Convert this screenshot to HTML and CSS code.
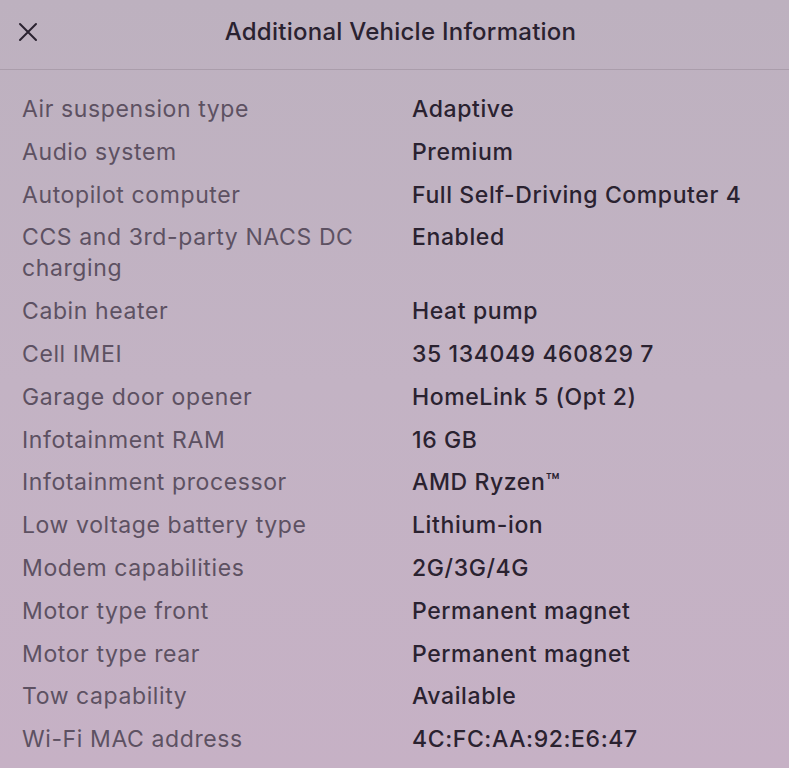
FILE: index.html
```html
<!DOCTYPE html>
<html lang="en">
<head>
<meta charset="utf-8">
<title>Additional Vehicle Information</title>
<link rel="stylesheet" href="styles.css">
</head>
<body>
<div class="screen">
  <header class="topbar">
    <button class="close" aria-label="Close">
      <svg width="20" height="20" viewBox="0 0 20 20"><path d="M2 2 L18 18 M18 2 L2 18" stroke="currentColor" stroke-width="2" stroke-linecap="round"/></svg>
    </button>
    <h1 class="title">Additional Vehicle Information</h1>
  </header>
  <dl class="info">
    <dt>Air suspension type</dt><dd>Adaptive</dd>
    <dt>Audio system</dt><dd>Premium</dd>
    <dt>Autopilot computer</dt><dd>Full Self-Driving Computer 4</dd>
    <dt>CCS and 3rd-party NACS DC charging</dt><dd>Enabled</dd>
    <dt>Cabin heater</dt><dd>Heat pump</dd>
    <dt>Cell IMEI</dt><dd>35 134049 460829 7</dd>
    <dt>Garage door opener</dt><dd>HomeLink 5 (Opt 2)</dd>
    <dt>Infotainment RAM</dt><dd>16 GB</dd>
    <dt>Infotainment processor</dt><dd>AMD Ryzen™</dd>
    <dt>Low voltage battery type</dt><dd>Lithium-ion</dd>
    <dt>Modem capabilities</dt><dd>2G/3G/4G</dd>
    <dt>Motor type front</dt><dd>Permanent magnet</dd>
    <dt>Motor type rear</dt><dd>Permanent magnet</dd>
    <dt>Tow capability</dt><dd>Available</dd>
    <dt>Wi-Fi MAC address</dt><dd>4C:FC:AA:92:E6:47</dd>
  </dl>
</div>
</body>
</html>
```
FILE: styles.css
```css
html, body {
  margin: 0;
  padding: 0;
}
body {
  width: 789px;
  height: 768px;
  overflow: hidden;
  background: linear-gradient(180deg, #bdb1bf 0%, #c3b3c4 50%, #c6b1c5 100%);
  font-family: Inter, "Open Sans", sans-serif;
}
.screen {
  display: flex;
  flex-direction: column;
  height: 100%;
}
.topbar {
  height: 70px;
  border-bottom: 1px solid #aa9dab;
  display: flex;
  align-items: center;
  padding-left: 18px;
  padding-bottom: 6px;
  box-sizing: border-box;
}
.close {
  background: none;
  border: none;
  padding: 0;
  width: 20px;
  height: 20px;
  color: #2a2230;
  display: flex;
}
.title {
  flex: 1;
  margin: 0 0 0 -38px;
  text-align: center;
  font-weight: 500;
  font-size: 24px;
  letter-spacing: 0.25px;
  color: #2a2230;
  padding-left: 12px;
}
.info {
  margin: 0;
  padding: 24px 0 0 22px;
  display: grid;
  grid-template-columns: 390px 1fr;
  row-gap: 11.8px;
  font-size: 23px;
  line-height: 31px;
  letter-spacing: 0.6px;
}
.info dt {
  color: #5d5162;
  padding-right: 28px;
}
.info dd {
  margin: 0;
  color: #2a2230;
  font-weight: 500;
}
```
